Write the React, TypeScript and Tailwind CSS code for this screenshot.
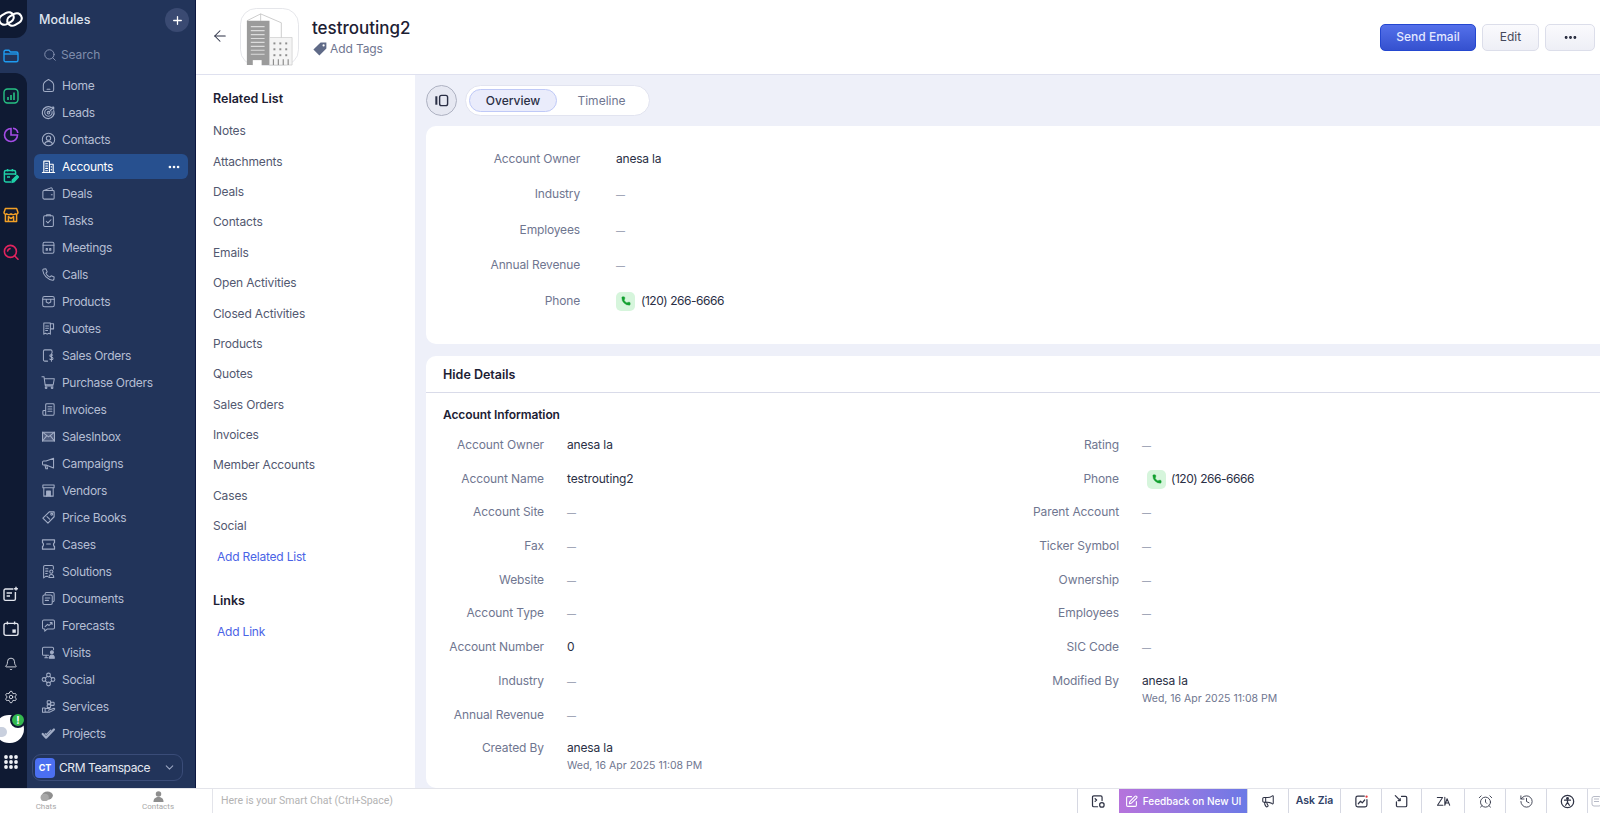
import React from 'react';
import {
  ArrowLeft, Bell, ChevronDown, Megaphone, Phone, Plus, Search, Settings, AlarmClock, History, SquarePen, MoreHorizontal,
} from 'lucide-react';

const FONT = 'font-["Inter","Noto_Sans",sans-serif]';

// small module glyphs, drawn on a 16 box like the CRM's own set
const Glyph = ({ children }: { children: React.ReactNode }) => (
  <svg viewBox="0 0 16 16" className="h-[15px] w-[15px] shrink-0" fill="none" stroke="currentColor" strokeWidth="1.1" strokeLinecap="round" strokeLinejoin="round">
    {children}
  </svg>
);

const glyphs: Record<string, React.ReactNode> = {
  Home: <><path d="M8 1.6 C10 2.6 13.5 5 13.5 7.5 V12.5 C13.5 13.7 12.7 14.4 11.6 14.4 H4.4 C3.3 14.4 2.5 13.7 2.5 12.5 V7.5 C2.5 5 6 2.6 8 1.6 Z" /><path d="M6.5 12 H9.5" /></>,
  Leads: <><path d="M11 2.8 A6.3 6.3 0 1 0 13.6 6" strokeWidth="1.3" /><path d="M9.8 4.4 A4 4 0 1 0 11.8 7" /><circle cx="8" cy="8.2" r="1.4" /><path d="M8.5 7.7 L13 3 M11.5 2.5 L13.6 2.2 L13.6 4.4" /></>,
  Contacts: <><circle cx="8" cy="8" r="6.6" /><circle cx="8" cy="6.6" r="2.3" /><path d="M3.8 12.6 C4.6 10.7 6.2 10 8 10 S11.4 10.7 12.2 12.6" /></>,
  Accounts: <><path d="M3 14 V2.2 H9 V14 M9 5.6 H13 V14 M1.5 14.4 H14.5" strokeWidth="1.2" /><path d="M5 5 H7 M5 7.5 H7 M5 10 H7 M5 12.5 H7 M11 8 V8.6 M11 11 V11.6" strokeWidth="1.2" /></>,
  Deals: <><path d="M2 6.2 C2 5.4 2.6 4.8 3.4 4.8 H13 C13.6 4.8 14 5.2 14 5.8 V13 C14 13.6 13.6 14 13 14 H3.4 C2.6 14 2 13.4 2 12.6 Z" /><path d="M3 4.8 L10.5 2 C11.4 1.8 12 2.3 12 3.2 V4.8 M11 9.4 H12" /></>,
  Tasks: <><rect x="2.8" y="3" width="10.4" height="11.4" rx="1.4" /><path d="M6 3 V1.8 H10 V3 M5.6 8.8 L7.4 10.6 L10.6 7.2" /></>,
  Meetings: <><rect x="2.2" y="2.4" width="11.6" height="11.8" rx="1.6" /><path d="M2.2 5.6 H13.8 M5.5 9 H6.8 V11 H5.5 Z M9.2 9 H10.5 V11 H9.2 Z" /></>,
  Calls: <path d="M3 2.2 L5.3 2 L6.6 5.2 L5.2 6.6 C5.9 8.4 7.6 10.1 9.4 10.8 L10.8 9.4 L14 10.7 L13.8 13 C13.7 13.8 13 14.2 12.3 14.1 C7 13.4 2.6 9 1.9 3.7 C1.8 3 2.2 2.3 3 2.2 Z" />,
  Products: <><rect x="1.8" y="2.6" width="12.4" height="11" rx="2" /><path d="M1.8 5.6 H14.2 M5.6 5.6 V8.6 L8 9.8 L10.4 8.6 V5.6" /></>,
  Quotes: <><path d="M3 2.2 H10 V14 L8.4 13 L6.6 14 L4.8 13 L3 14 Z" /><path d="M10 3 H13.4 V8.4 H10 M5 5.4 H8 M5 7.8 H8 M5 10.2 H7" /></>,
  'Sales Orders': <><path d="M7 14 H4 C3.2 14 2.6 13.4 2.6 12.6 V3.4 C2.6 2.6 3.2 2 4 2 H10.4 C11.2 2 11.8 2.6 11.8 3.4 V5.4" /><path d="M12.4 7.6 C11.6 6.8 9.4 6.8 9.4 8.3 C9.4 10 12.8 9.4 12.8 11.2 C12.8 12.7 10.4 12.7 9.4 11.8 M11.1 6 V14" /></>,
  'Purchase Orders': <><path d="M1 1.8 H3.2 L4.4 10.4 H13 L14.2 4 H3.6" /><path d="M4.6 10.4 V11.6 H12.8" /><circle cx="5.4" cy="13.6" r=".9" /><circle cx="11.8" cy="13.6" r=".9" /></>,
  Invoices: <><path d="M5 9 V2.8 C5 2.2 5.4 1.8 6 1.8 H13 C13.6 1.8 14 2.2 14 2.8 V12.4 C14 13.4 13.4 14.2 12.4 14.2 H3.6 C2.6 14.2 2 13.4 2 12.4 V10 C2 9.4 2.4 9 3 9 H5 V14" /><path d="M7.4 5 H11.6 M7.4 7.4 H11.6 M7.4 9.8 H11.6" /></>,
  SalesInbox: <><path d="M1.6 3.4 H14.4 V12.8 H1.6 Z" fill="currentColor" fillOpacity=".35" /><path d="M1.6 3.4 L8 8.4 L14.4 3.4 M1.6 12.8 L6 7.4 M14.4 12.8 L10 7.4" /></>,
  Campaigns: <><path d="M13.4 2.4 L5.4 5.4 H2.8 C2 5.4 1.6 6 1.6 6.6 V8.4 C1.6 9 2 9.6 2.8 9.6 H5.4 L13.4 12.8 Z" /><path d="M4.2 9.6 L5.2 13.6 H7 L6.2 10.2" /></>,
  Vendors: <><path d="M2 2.2 H14 V5 H2 Z M3 5 V14 H13 V5" /><path d="M6 14 V8.6 H10 V14 M7.4 11.4 H8.6" fill="currentColor" /></>,
  'Price Books': <><path d="M8.8 2 H14 V7.2 L7.4 14 L2 8.6 Z" strokeWidth="1.2" /><circle cx="11.4" cy="4.6" r="1" /><path d="M6.4 7 L9.2 9.8" /></>,
  Cases: <><path d="M1.6 3 H14.4 V6 C13 6.4 13 9.6 14.4 10 V13 H1.6 V10 C3 9.6 3 6.4 1.6 6 Z" strokeWidth="1.3" /><path d="M6 7.4 H10" /></>,
  Solutions: <><path d="M7 13.2 H5 L2.8 14.8 V3 C2.8 2.2 3.4 1.6 4.2 1.6 H11.8 C12.6 1.6 13.2 2.2 13.2 3 V5.4" /><path d="M5 5 H7.4 M5 7.6 H7.4 M5 10.2 H6.6" /><circle cx="11" cy="8.2" r="1.7" /><path d="M8.4 14.4 C8.4 12 9.4 11.2 11 11.2 S13.6 12 13.6 14.4 Z" /></>,
  Documents: <><path d="M4.4 3.6 V3 C4.4 2.2 5 1.6 5.8 1.6 H12.6 C13.4 1.6 14 2.2 14 3 V10 C14 10.8 13.4 11.4 12.6 11.4" /><rect x="2" y="4.2" width="10" height="10.2" rx="1.6" /><path d="M4.6 7.4 H9.4 M4.6 10 H8" /></>,
  Forecasts: <><path d="M3 2.2 H13 C13.8 2.2 14.4 2.8 14.4 3.6 V10.4 C14.4 11.2 13.8 11.8 13 11.8 H6.6 L4 14 V11.8 H3 C2.2 11.8 1.6 11.2 1.6 10.4 V3.6 C1.6 2.8 2.2 2.2 3 2.2 Z" /><path d="M4.4 9.2 L7 6.8 L8.6 8 L11.6 5 M9.8 4.8 H11.8 V6.8" /></>,
  Visits: <><path d="M8 11 H2.8 C2.2 11 1.6 10.4 1.6 9.8 V3.6 C1.6 3 2.2 2.4 2.8 2.4 H12 C12.8 2.4 13.4 3 13.4 3.6 V5" /><path d="M4 13.6 H7.6 M5.4 11 V13.6" /><circle cx="11.6" cy="7.8" r="1.6" fill="currentColor" /><path d="M9 14 C9 11.8 10 10.8 11.6 10.8 S14.2 11.8 14.2 14 Z" fill="currentColor" /></>,
  Social: <><circle cx="8" cy="3.2" r="2" /><circle cx="8" cy="12.8" r="2" /><circle cx="3.2" cy="8" r="2" /><circle cx="12.8" cy="8" r="2" /><path d="M6.6 4.6 L4.6 6.6 M9.4 4.6 L11.4 6.6 M6.6 11.4 L4.6 9.4 M9.4 11.4 L11.4 9.4" /></>,
  Services: <><rect x="6.6" y="1.8" width="3.6" height="3.4" rx=".8" /><rect x="10.4" y="3.4" width="3.6" height="3.4" rx=".8" /><rect x="6.6" y="6" width="3.6" height="3.2" rx=".8" /><path d="M1.6 9.6 H4.4 V14.2 H1.6 Z M4.4 10.4 L8 9.8 L10 11 L8 12 M9.6 11.4 L14 9.8 C14.8 10 14.8 11 14.2 11.4 L9.4 14 H4.4" /></>,
  Projects: <><path d="M1.8 8.6 L5.4 12.4 L13.8 3.8" strokeWidth="2.4" /><path d="M4.6 8.2 L5.6 9.2 L10.4 4.4" strokeWidth="1.4" /></>,
};

const modules = ['Home', 'Leads', 'Contacts', 'Accounts', 'Deals', 'Tasks', 'Meetings', 'Calls', 'Products', 'Quotes', 'Sales Orders', 'Purchase Orders', 'Invoices', 'SalesInbox', 'Campaigns', 'Vendors', 'Price Books', 'Cases', 'Solutions', 'Documents', 'Forecasts', 'Visits', 'Social', 'Services', 'Projects'];

const related = ['Notes', 'Attachments', 'Deals', 'Contacts', 'Emails', 'Open Activities', 'Closed Activities', 'Products', 'Quotes', 'Sales Orders', 'Invoices', 'Member Accounts', 'Cases', 'Social'];

const PhoneChip = () => (
  <span className="flex h-[19px] w-[19px] shrink-0 items-center justify-center rounded-[5px] bg-[#d6f5dc]">
    <Phone className="h-[10px] w-[10px] text-[#12a02f]" fill="#12a02f" strokeWidth={1} />
  </span>
);

const PhoneValue = ({ gap }: { gap: string }) => (
  <span className={`flex items-center ${gap}`}>
    <PhoneChip />
    <span className="tracking-[-0.45px]">(120) 266-6666</span>
  </span>
);

const Dash = () => <span className="text-[9px] text-[#8d93a8]">—</span>;

const Field = ({ label, value, sub, h = 'h-[33.7px]' }: { label: string; value?: React.ReactNode; sub?: string; h?: string }) => (
  <div className={`flex ${h}`}>
    <div className="w-[118px] shrink-0 text-right text-[12px] leading-[18px] tracking-[-0.1px] text-[#6f7690]">{label}</div>
    <div className="ml-[23px] text-[12px] leading-[18px] tracking-[-0.15px] text-[#2a2f45]">
      {value ?? <Dash />}
      {sub && <div className="mt-[1px] text-[10.5px] leading-[16px] tracking-[0px] text-[#6f7690]">{sub}</div>}
    </div>
  </div>
);

const BuildingLogo = () => (
  <svg viewBox="0 0 60 60" className="h-[59px] w-[59px]">
    <rect x="0.5" y="0.5" width="59" height="58" rx="16" fill="#fff" stroke="#e4e5ea" />
    <path d="M21 6 L42 15 V32" fill="none" stroke="#b8b8b8" strokeWidth="0.7" />
    <path d="M7 13 L21 6 V13" fill="none" stroke="#b8b8b8" strokeWidth="0.7" />
    <path d="M7 13 H30 V58 H7 Z" fill="#9b9b9b" />
    <path d="M11 19 H25 M11 23 H25 M11 27 H25 M11 31 H25 M11 35 H25 M11 39 H25 M11 43 H25 M11 47 H25" stroke="#dcdcdc" strokeWidth="1.2" />
    <rect x="13" y="53" width="9" height="6" fill="#fff" />
    <path d="M30 30 H53 V58 H30 Z" fill="#f4f4f4" stroke="#c4c4c4" strokeWidth="0.6" />
    <g fill="#8e8e8e">
      {[35, 41, 47].flatMap((y) => [34, 40, 46].map((x) => <rect key={`${x}-${y}`} x={x} y={y} width="2" height="2" />))}
    </g>
    <path d="M34 52 V58 M39 52 V58 M44 52 V58 M49 52 V58" stroke="#8e8e8e" strokeWidth="1.2" />
  </svg>
);

const RailIcon = ({ children, h = 'h-[39px]' }: { children: React.ReactNode; h?: string }) => (
  <div className={`flex ${h} w-full shrink-0 items-center justify-center pr-[6px]`}>{children}</div>
);

const BarCell = ({ children, w }: { children: React.ReactNode; w: string }) => (
  <div className={`flex h-full ${w} shrink-0 items-center justify-center border-l border-[#d6d8e2] text-[#2f3345]`}>{children}</div>
);

const BarIcon = ({ children }: { children: React.ReactNode }) => (
  <svg viewBox="0 0 16 16" className="h-[15px] w-[15px]" fill="none" stroke="currentColor" strokeWidth="1.3" strokeLinecap="round" strokeLinejoin="round">
    {children}
  </svg>
);

export default function App() {
  return (
    <div className={`flex h-[813px] w-[1600px] flex-col overflow-hidden bg-white ${FONT}`}>
      <div className="flex min-h-0 flex-1">
        {/* icon rail */}
        <div className="flex w-[27px] shrink-0 flex-col bg-[#22345a]">
          <div className="flex h-[38px] items-center overflow-hidden rounded-br-[12px] bg-[#0f1a33]">
            <svg viewBox="0 0 26 22" className="ml-[-2px] h-[22px] w-[26px] shrink-0" fill="none" stroke="#fff" strokeWidth="2.2">
              <rect x="1" y="5.5" width="15" height="10" rx="5" transform="rotate(-30 8.5 10.5)" />
              <rect x="9" y="6.5" width="15" height="10" rx="5" transform="rotate(-30 16.5 11.5)" />
            </svg>
          </div>
          <div className="flex h-[35px] items-center justify-center pr-[6px]">
            <svg viewBox="0 0 16 16" className="h-[16px] w-[16px]" fill="none" stroke="#1e9bf0" strokeWidth="1.4" strokeLinejoin="round"><path d="M1 4.2 C1 3 1.6 2.2 2.6 2.2 H6 L7.4 4 H13.4 C14.4 4 15 4.8 15 5.6 V12 C15 13 14.4 13.8 13.4 13.8 H2.6 C1.6 13.8 1 13 1 12 Z" /><path d="M1 6 H15" /></svg>
          </div>
          <div className="flex min-h-0 flex-1 flex-col rounded-tr-[12px] bg-[#0f1a33] pb-[9px]">
            <div className="h-[3px] shrink-0" />
            <RailIcon><svg viewBox="0 0 16 16" className="h-[16px] w-[16px]" fill="none" stroke="#27c184" strokeWidth="1.4"><rect x="1" y="1" width="14" height="14" rx="3.5" /><path d="M5 12 V9 M8 12 V7 M11 12 V4.5" strokeWidth="1.6" /></svg></RailIcon>
            <RailIcon h="h-[40px]"><svg viewBox="0 0 16 16" className="h-[16px] w-[16px]" fill="none" stroke="#a44ce6" strokeWidth="1.6"><path d="M8 1.5 A6.5 6.5 0 1 0 14.5 8 H8 Z" /><path d="M10 1.2 A5.5 5.5 0 0 1 14.8 6" /></svg></RailIcon>
            <RailIcon h="h-[41px]"><svg viewBox="0 0 16 16" className="h-[16px] w-[16px]" fill="none" stroke="#1fd0a8" strokeWidth="1.5" strokeLinejoin="round"><path d="M8 14 H3 C2 14 1.4 13.4 1.4 12.4 V4 C1.4 3 2 2.4 3 2.4 H11 C12 2.4 12.6 3 12.6 4 V7 M1.4 6 H12.6 M4.6 1 V3.4 M9.4 1 V3.4 M4 9 H7" /><path d="M9 14.4 L9.4 12 L14 7.6 L15.4 9 L11 13.8 Z" fill="#1fd0a8" /></svg></RailIcon>
            <RailIcon h="h-[38px]"><svg viewBox="0 0 16 16" className="h-[16px] w-[16px]" fill="none" stroke="#f2a026" strokeWidth="1.5" strokeLinejoin="round"><path d="M2.4 1.6 H13.6 L15 5.6 C15 7 13.4 7.6 12.4 6.8 C11.4 7.8 9.2 7.8 8 6.8 C6.8 7.8 4.6 7.8 3.6 6.8 C2.6 7.6 1 7 1 5.6 Z M2.4 7.4 V14.4 H13.6 V7.4" /><path d="M5.4 14 V9.6 L8 11.6 L10.6 9.6 V14" /></svg></RailIcon>
            <RailIcon h="h-[36px]"><svg viewBox="0 0 16 16" className="h-[16px] w-[16px]" fill="none" stroke="#e0245e" strokeWidth="1.6" strokeLinecap="round"><circle cx="7.4" cy="7.4" r="6" /><path d="M4.6 7 A3 3 0 0 1 7 4.6 M11.8 12 L15 15.2" /></svg></RailIcon>
            <div className="flex-1" />
            <RailIcon h="h-[34px]"><svg viewBox="0 0 16 16" className="h-[16px] w-[16px]" fill="none" stroke="#e3e6ee" strokeWidth="1.4"><path d="M10.4 3 H2.4 C1.6 3 1 3.6 1 4.4 V13 C1 13.8 1.6 14.4 2.4 14.4 H11 C11.8 14.4 12.4 13.8 12.4 13 V6 M3.6 7 H9 M3.6 10 H7 M13 .8 V4.6 M11.1 2.7 H14.9" /></svg></RailIcon>
            <RailIcon h="h-[36px]"><svg viewBox="0 0 16 16" className="h-[16px] w-[16px]" fill="none" stroke="#e3e6ee" strokeWidth="1.4"><rect x="1" y="2.4" width="14" height="12" rx="1.8" /><path d="M4.4 .6 V3.6 M11.6 .6 V3.6" /><rect x="9.4" y="8.4" width="3.4" height="3.4" fill="#e3e6ee" stroke="none" /></svg></RailIcon>
            <RailIcon h="h-[33.7px]"><Bell className="h-[14px] w-[14px] text-[#e3e6ee]" strokeWidth={1.5} /></RailIcon>
            <RailIcon h="h-[33.7px]"><Settings className="h-[14px] w-[14px] text-[#e3e6ee]" strokeWidth={1.5} /></RailIcon>
            <div className="relative h-[31px] w-[27px] shrink-0">
              <div className="absolute left-[-5px] top-[1px] h-[28px] w-[29px] overflow-hidden rounded-full bg-white">
                <div className="absolute left-[0px] top-[12px] h-[10px] w-[12px] rounded-full bg-[#c9d0de]" />
                <div className="absolute left-[18px] top-[2px] h-[10px] w-[8px] rounded-full bg-[#c9d0de]" />
              </div>
              <div className="absolute left-[10px] top-[-2px] flex h-[16px] w-[16px] items-center justify-center rounded-full border-2 border-[#0f1a33] bg-[#34b94f] text-[10px] font-bold leading-none text-white">!</div>
            </div>
            <RailIcon h="h-[33.7px]">
              <svg viewBox="0 0 14 14" className="h-[14px] w-[14px]" fill="#f0f2f7">
                {[2, 7, 12].flatMap((y) => [2, 7, 12].map((x) => <circle key={`${x}-${y}`} cx={x} cy={y} r="1.9" />))}
              </svg>
            </RailIcon>
          </div>
        </div>

        {/* modules */}
        <div className="relative flex w-[169px] shrink-0 flex-col border-r border-[#0c1740] bg-[#22345a]">
          <div className="mt-[1px] flex h-[38px] shrink-0 items-center justify-between pl-[12px] pr-[6px]">
            <span className="text-[12.5px] font-medium text-[#dfe3ee]">Modules</span>
            <span className="flex h-[24px] w-[24px] items-center justify-center rounded-full bg-[#3a4a72]"><Plus className="h-[13px] w-[13px] text-white" strokeWidth={2.4} /></span>
          </div>
          <div className="mb-[1px] flex h-[32px] shrink-0 items-center gap-[4px] pl-[16px]">
            <Search className="h-[14px] w-[14px] text-[#8a96b4]" strokeWidth={1.6} />
            <span className="text-[12px] tracking-[-0.1px] text-[#7f8cab]">Search</span>
          </div>
          <div className="flex flex-col">
            {modules.map((name) => {
              const active = name === 'Accounts';
              return (
                <div key={name} className="flex h-[27px] shrink-0 items-center px-[7px]">
                  <div className={`flex h-[25px] w-full items-center gap-[6px] rounded-[6px] pl-[7px] pr-[7px] ${active ? 'bg-[#27508f] text-white' : 'text-[#a2adc6]'}`}>
                    <Glyph>{glyphs[name]}</Glyph>
                    <span className={`flex-1 text-[12px] leading-none tracking-[-0.3px] ${active ? 'text-white' : 'text-[#b5bed3]'}`}>{name}</span>
                    {active && <MoreHorizontal className="h-[14px] w-[14px]" strokeWidth={2.5} />}
                  </div>
                </div>
              );
            })}
          </div>
          <div className="ml-[5px] mr-[12px] mt-[7px] flex h-[27px] shrink-0 items-center gap-[4px] rounded-[9px] border border-[#3a4c78] pl-[2px] pr-[6px]">
            <span className="flex h-[20px] w-[20px] items-center justify-center rounded-[4px] bg-[#4b6ff0] text-[9px] font-bold text-white">CT</span>
            <span className="flex-1 whitespace-nowrap text-[12px] tracking-[-0.4px] text-[#e5e8f1]">CRM Teamspace</span>
            <ChevronDown className="h-[13px] w-[13px] text-[#9aa5c1]" />
          </div>
        </div>

        {/* content */}
        <div className="flex min-w-0 flex-1 flex-col">
          <div className="flex h-[75px] shrink-0 items-center border-b border-[#dfe1ef] pl-[15px] pr-[5px]">
            <ArrowLeft className="mt-[-2px] h-[18px] w-[18px] text-[#2a2f45]" strokeWidth={1.4} />
            <div className="ml-[11px]"><BuildingLogo /></div>
            <div className="ml-[13px]">
              <div className="text-[17px] font-medium leading-[24px] text-[#1c2033]">testrouting2</div>
              <div className="flex items-center gap-[2px] text-[12px] tracking-[-0.1px] text-[#6f7690]">
                <svg viewBox="0 0 16 16" className="h-[16px] w-[16px]" fill="#5f6a87"><path d="M8.6 1.6 H14.4 V7.4 L7.4 14.6 L1.4 8.6 Z" /><circle cx="11.6" cy="4.4" r="1.1" fill="#fff" /></svg>
                Add Tags
              </div>
            </div>
            <div className="flex-1" />
            <div className="flex items-center gap-[6px]">
              <button className="h-[27px] w-[96px] rounded-[5px] border border-[#2447d0] bg-gradient-to-b from-[#5470ea] to-[#3551cf] text-[12px] font-medium text-[#e3e8ff]">Send Email</button>
              <button className="h-[27px] w-[57px] rounded-[5px] border border-[#dcdeea] bg-gradient-to-b from-[#fafafd] to-[#eeeff6] text-[12px] text-[#45495c]">Edit</button>
              <button className="flex h-[27px] w-[50px] items-center justify-center rounded-[5px] border border-[#dcdeea] bg-gradient-to-b from-[#fafafd] to-[#eeeff6] text-[#1c2033]"><MoreHorizontal className="h-[15px] w-[15px]" strokeWidth={2.6} /></button>
            </div>
          </div>

          <div className="flex min-h-0 flex-1">
            <div className="w-[219px] shrink-0 pl-[17px]">
              <div className="mt-[15px] text-[12.5px] font-semibold leading-[18px] text-[#1c2033]">Related List</div>
              <div className="mt-[8px] flex flex-col">
                {related.map((r) => (
                  <div key={r} className="flex h-[30.4px] items-center text-[12px] tracking-[-0.15px] text-[#525870]">{r}</div>
                ))}
                <div className="flex h-[30.4px] items-center pl-[4px] text-[12px] tracking-[-0.2px] text-[#4a63e6]">Add Related List</div>
              </div>
              <div className="mt-[20px] text-[12.5px] font-semibold leading-[18px] text-[#1c2033]">Links</div>
              <div className="mt-[7px] flex h-[30px] items-center pl-[4px] text-[12px] tracking-[-0.2px] text-[#4a63e6]">Add Link</div>
            </div>

            <div className="flex min-w-0 flex-1 flex-col overflow-hidden bg-[#eef0f9] pl-[11px]">
              <div className="flex h-[51px] shrink-0 items-center gap-[8px]">
                <span className="flex h-[31px] w-[31px] items-center justify-center rounded-full border border-[#aeb2c2] bg-[#e6e8f2]">
                  <svg viewBox="0 0 16 16" className="h-[15px] w-[15px]" fill="none" stroke="#2a2f45" strokeWidth="1.5"><rect x="6" y="2.5" width="8.5" height="11" rx="2" /><path d="M2.5 3.5 V12.5" strokeWidth="2.2" /></svg>
                </span>
                <div className="flex h-[31px] w-[185px] items-center rounded-full border border-[#e2e4f0] bg-white px-[3px]">
                  <span className="flex h-[23px] w-[88px] items-center justify-center rounded-full border border-[#bfc9f7] bg-[#eaecfb] text-[12px] font-medium text-[#2a2f45]">Overview</span>
                  <span className="flex flex-1 items-center justify-center text-[12px] text-[#6f7690]">Timeline</span>
                </div>
              </div>

              <div className="h-[218px] shrink-0 rounded-l-[10px] bg-white pt-[24px]">
                {[
                  ['Account Owner', 'anesa la'],
                  ['Industry', null],
                  ['Employees', null],
                  ['Annual Revenue', null],
                ].map(([l, v]) => (
                  <div key={l} className="flex h-[35.4px] items-start">
                    <div className="w-[154px] text-right text-[12px] leading-[18px] tracking-[-0.15px] text-[#6f7690]">{l}</div>
                    <div className="ml-[36px] text-[12px] leading-[18px] tracking-[-0.2px] text-[#2a2f45]">{v ?? <Dash />}</div>
                  </div>
                ))}
                <div className="flex items-start">
                  <div className="w-[154px] text-right text-[12px] leading-[18px] tracking-[-0.15px] text-[#6f7690]">Phone</div>
                  <div className="ml-[36px] text-[12px] leading-[18px] text-[#2a2f45]"><PhoneValue gap="gap-[6px]" /></div>
                </div>
              </div>

              <div className="mt-[12px] flex-1 rounded-l-[10px] bg-white">
                <div className="flex h-[37px] items-center border-b border-[#d9dbe9] pl-[17px] pt-[2px] text-[12.5px] font-semibold text-[#1c2033]">Hide Details</div>
                <div className="pl-[17px] pt-[13px] text-[12px] font-semibold leading-[18px] tracking-[-0.1px] text-[#1c2033]">Account Information</div>
                <div className="mt-[12px] flex">
                  <div className="w-[575px] shrink-0">
                    <Field label="Account Owner" value="anesa la" />
                    <Field label="Account Name" value="testrouting2" />
                    <Field label="Account Site" />
                    <Field label="Fax" />
                    <Field label="Website" />
                    <Field label="Account Type" />
                    <Field label="Account Number" value="0" />
                    <Field label="Industry" />
                    <Field label="Annual Revenue" />
                    <Field label="Created By" value="anesa la" sub="Wed, 16 Apr 2025 11:08 PM" h="h-[36px]" />
                  </div>
                  <div>
                    <Field label="Rating" />
                    <Field label="Phone" value={<span className="ml-[5px] block"><PhoneValue gap="gap-[5px]" /></span>} />
                    <Field label="Parent Account" />
                    <Field label="Ticker Symbol" />
                    <Field label="Ownership" />
                    <Field label="Employees" />
                    <Field label="SIC Code" />
                    <Field label="Modified By" value="anesa la" sub="Wed, 16 Apr 2025 11:08 PM" h="h-[36px]" />
                  </div>
                </div>
              </div>
            </div>
          </div>
        </div>
      </div>

      {/* bottom bar */}
      <div className="flex h-[25px] shrink-0 items-center border-t border-[#e3e4ea] bg-white font-['Roboto',sans-serif]">
        <div className="flex h-full w-[213px] shrink-0 border-r border-[#e3e4ea]">
          <div className="flex w-[92px] flex-col items-center text-[8px] leading-[9px] text-[#a8a8a8]">
            <svg viewBox="0 0 14 12" className="mt-[2px] h-[11px] w-[13px]" fill="#8e8e8e"><ellipse cx="8" cy="5" rx="6" ry="4.5" /><ellipse cx="5" cy="7" rx="4.5" ry="4" fill="#a8a8a8" /></svg>
            Chats
          </div>
          <div className="ml-[20px] flex w-[92px] flex-col items-center text-[8px] leading-[9px] text-[#a8a8a8]">
            <svg viewBox="0 0 14 12" className="mt-[2px] h-[11px] w-[13px]" fill="#8e8e8e"><circle cx="7" cy="3.2" r="3" /><path d="M1.5 12 C1.5 8 4 6.5 7 6.5 S12.5 8 12.5 12 Z" /></svg>
            Contacts
          </div>
        </div>
        <div className="ml-[8px] flex-1 text-[10.5px] text-[#b3b3b3]">Here is your Smart Chat (Ctrl+Space)</div>
        <div className={`flex h-full items-stretch ${FONT}`}>
          <BarCell w="w-[42px]"><BarIcon><path d="M7 13.6 H3 C2.2 13.6 1.6 13 1.6 12.2 V3.4 C1.6 2.6 2.2 2 3 2 H10.4 C11.2 2 11.8 2.6 11.8 3.4 V7 M4.4 5 L6 6.4 L4.4 7.8" /><circle cx="11.6" cy="11.6" r="2.4" /></BarIcon></BarCell>
          <div className="flex h-full w-[128px] shrink-0 items-center justify-center gap-[5px] bg-gradient-to-r from-[#b673dc] to-[#6b79e6] text-[10px] font-medium text-white">
            <SquarePen className="h-[13px] w-[13px]" strokeWidth={2} />
            Feedback on New UI
          </div>
          <BarCell w="w-[41px]"><Megaphone className="h-[14px] w-[14px]" strokeWidth={1.8} /></BarCell>
          <BarCell w="w-[52px]"><span className="text-[10.5px] font-semibold text-[#2f3f66]">Ask Zia</span></BarCell>
          <BarCell w="w-[41px]"><BarIcon><path d="M11 2.2 H4 C2.8 2.2 2 3 2 4.2 V11.8 C2 13 2.8 13.8 4 13.8 H11.8 C13 13.8 13.8 13 13.8 11.8 V6" /><path d="M4.6 10.4 L7 7.6 L8.8 9.4 L11.4 6.4" /><circle cx="13.4" cy="2.8" r="1.2" fill="#e5383b" stroke="none" /></BarIcon></BarCell>
          <BarCell w="w-[40px]"><BarIcon><path d="M8 2.6 H12.2 C13 2.6 13.6 3.2 13.6 4 V12.2 C13.6 13 13 13.6 12.2 13.6 H4 C3.2 13.6 2.6 13 2.6 12.2 V8.4" /><path d="M1.4 1.8 L6.4 6.8" /><path d="M6.6 4.8 V7 H4.4" /></BarIcon></BarCell>
          <BarCell w="w-[43px]"><BarIcon><path d="M1.4 3.8 H7 L1.6 12 H7.4 M9.4 3.4 V12 M9.4 12 L11.8 5 L14.6 12 M10.6 9.6 H13.6" strokeWidth="1.1" /></BarIcon></BarCell>
          <BarCell w="w-[41px]"><AlarmClock className="h-[15px] w-[15px]" strokeWidth={1.4} /></BarCell>
          <BarCell w="w-[41px]"><History className="h-[15px] w-[15px]" strokeWidth={1.4} /></BarCell>
          <BarCell w="w-[41px]"><BarIcon><circle cx="8" cy="8" r="6.6" /><circle cx="8" cy="4.8" r=".9" fill="currentColor" /><path d="M4.8 6.6 H11.2 M8 6.6 V9 L6 12 M8 9 L10 12" /></BarIcon></BarCell>
          <div className="flex h-full w-[13px] items-center border-l border-[#d6d8e2] pl-[3px]">
            <svg viewBox="0 0 12 12" className="h-[12px] w-[12px] shrink-0" fill="none" stroke="#b7bac6"><rect x="1" y="1.5" width="9" height="9.5" rx="2" /><path d="M3 4 H8 M3 6.5 H8" /></svg>
          </div>
        </div>
      </div>
    </div>
  );
}
